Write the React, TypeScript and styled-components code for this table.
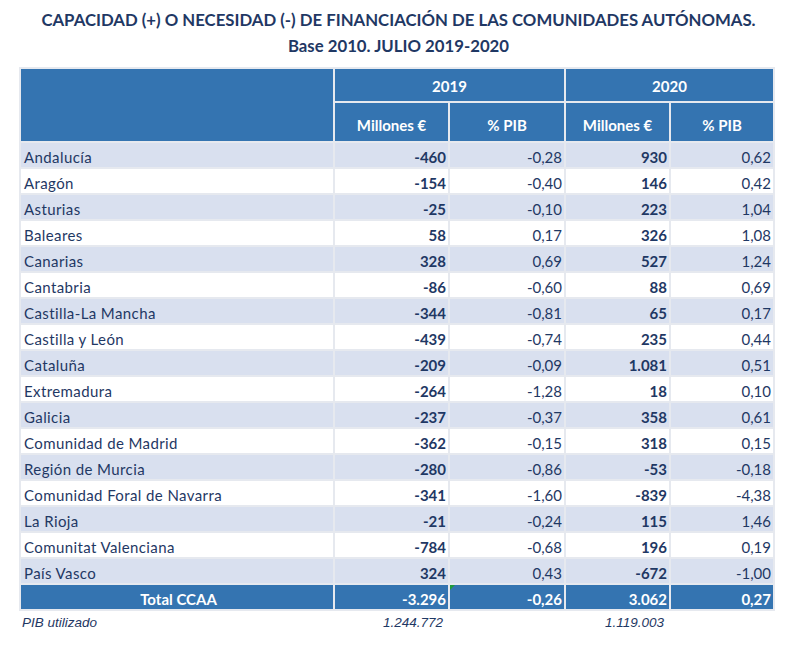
import React from "react";
import styled, { createGlobalStyle, css } from "styled-components";

const GlobalStyle = createGlobalStyle`
  html, body { margin: 0; padding: 0; background: #ffffff; }
  body { font-family: Lato, "Open Sans", sans-serif; }
`;

const NAVY = "#1f3864";
const BLUE = "#3474b1";
const STRIPE = "#d9e0ef";
const GRID = "#e6e9ef";

const Page = styled.div`
  width: 797px;
  height: 650px;
  padding-top: 7px;
  box-sizing: border-box;
  display: flex;
  flex-direction: column;
  align-items: flex-start;
`;

const Title = styled.h1`
  margin: 0 0 8px 0;
  width: 797px;
  text-align: center;
  font-family: Lato, sans-serif;
  font-weight: 700;
  font-size: 16.75px;
  line-height: 26px;
  color: ${NAVY};
`;

const Table = styled.table`
  margin-left: 19px;
  border-collapse: separate;
  border-spacing: 2px;
  background: ${GRID};
  table-layout: fixed;
  width: 756px;
  font-family: Lato, sans-serif;
  font-size: 15px;
  color: ${NAVY};
`;

const HeadCell = styled.th<{ $h?: number; $pt?: number }>`
  box-sizing: border-box;
  background: ${BLUE};
  color: #ffffff;
  font-weight: 700;
  font-size: 15px;
  text-align: center;
  padding: ${(p) => p.$pt ?? 0}px 0 0 0;
  height: ${(p) => p.$h ?? 32}px;
`;

const Row = styled.tr<{ $striped?: boolean; $total?: boolean }>`
  background: ${(p) => (p.$total ? BLUE : p.$striped ? STRIPE : "#ffffff")};
  color: ${(p) => (p.$total ? "#ffffff" : NAVY)};
`;

const NameCell = styled.td<{ $total?: boolean }>`
  box-sizing: border-box;
  height: 24px;
  padding: 3px 0 0 3px;
  white-space: nowrap;
  letter-spacing: 0.4px;
  ${(p) =>
    p.$total &&
    css`
      text-align: center;
      font-weight: 700;
      letter-spacing: 0;
    `}
`;

const NumCell = styled.td<{ $bold?: boolean; $flag?: boolean }>`
  box-sizing: border-box;
  height: 24px;
  padding: 3px 2px 0 0;
  text-align: right;
  white-space: nowrap;
  font-weight: ${(p) => (p.$bold ? 700 : 400)};
  position: relative;
  ${(p) =>
    p.$flag &&
    css`
      &::before {
        content: "";
        position: absolute;
        left: 0;
        top: 0;
        border-top: 5px solid #1f9a3a;
        border-right: 5px solid transparent;
      }
    `}
`;

const Footer = styled.div`
  margin-left: 21px;
  display: grid;
  grid-template-columns: 312px 113px 114px 103px 102px;
  column-gap: 2px;
  height: 20px;
  padding-top: 1px;
  align-items: center;
  font-family: "Liberation Sans", Arial, sans-serif;
  font-style: italic;
  font-size: 13.5px;
  color: ${NAVY};
`;

const FootLabel = styled.span`
  padding-left: 1px;
`;

const FootNum = styled.span`
  text-align: right;
  padding-right: 5px;
`;

type Datum = [string, string, string, string, string];

const rows: Datum[] = [
  ["Andalucía", "-460", "-0,28", "930", "0,62"],
  ["Aragón", "-154", "-0,40", "146", "0,42"],
  ["Asturias", "-25", "-0,10", "223", "1,04"],
  ["Baleares", "58", "0,17", "326", "1,08"],
  ["Canarias", "328", "0,69", "527", "1,24"],
  ["Cantabria", "-86", "-0,60", "88", "0,69"],
  ["Castilla-La Mancha", "-344", "-0,81", "65", "0,17"],
  ["Castilla y León", "-439", "-0,74", "235", "0,44"],
  ["Cataluña", "-209", "-0,09", "1.081", "0,51"],
  ["Extremadura", "-264", "-1,28", "18", "0,10"],
  ["Galicia", "-237", "-0,37", "358", "0,61"],
  ["Comunidad de Madrid", "-362", "-0,15", "318", "0,15"],
  ["Región de Murcia", "-280", "-0,86", "-53", "-0,18"],
  ["Comunidad Foral de Navarra", "-341", "-1,60", "-839", "-4,38"],
  ["La Rioja", "-21", "-0,24", "115", "1,46"],
  ["Comunitat Valenciana", "-784", "-0,68", "196", "0,19"],
  ["País Vasco", "324", "0,43", "-672", "-1,00"],
];

export default function App() {
  return (
    <>
      <GlobalStyle />
      <Page>
        <Title>
          CAPACIDAD (+) O NECESIDAD (-) DE FINANCIACIÓN DE LAS COMUNIDADES AUTÓNOMAS.
          <br />
          Base 2010. JULIO 2019-2020
        </Title>
        <Table>
          <colgroup>
            <col style={{ width: 312 }} />
            <col style={{ width: 113 }} />
            <col style={{ width: 114 }} />
            <col style={{ width: 103 }} />
            <col style={{ width: 102 }} />
          </colgroup>
          <thead>
            <tr>
              <HeadCell rowSpan={2} />
              <HeadCell colSpan={2} $h={32} $pt={1}>2019</HeadCell>
              <HeadCell colSpan={2} $h={32} $pt={1}>2020</HeadCell>
            </tr>
            <tr>
              <HeadCell $h={38} $pt={5}>Millones €</HeadCell>
              <HeadCell $h={38} $pt={5}>% PIB</HeadCell>
              <HeadCell $h={38} $pt={5}>Millones €</HeadCell>
              <HeadCell $h={38} $pt={5}>% PIB</HeadCell>
            </tr>
          </thead>
          <tbody>
            {rows.map((r, i) => (
              <Row key={r[0]} $striped={i % 2 === 0}>
                <NameCell>{r[0]}</NameCell>
                <NumCell $bold>{r[1]}</NumCell>
                <NumCell>{r[2]}</NumCell>
                <NumCell $bold>{r[3]}</NumCell>
                <NumCell>{r[4]}</NumCell>
              </Row>
            ))}
            <Row $total>
              <NameCell $total>Total CCAA</NameCell>
              <NumCell $bold>-3.296</NumCell>
              <NumCell $bold $flag>-0,26</NumCell>
              <NumCell $bold>3.062</NumCell>
              <NumCell $bold>0,27</NumCell>
            </Row>
          </tbody>
        </Table>
        <Footer>
          <FootLabel>PIB utilizado</FootLabel>
          <FootNum>1.244.772</FootNum>
          <span />
          <FootNum>1.119.003</FootNum>
          <span />
        </Footer>
      </Page>
    </>
  );
}
